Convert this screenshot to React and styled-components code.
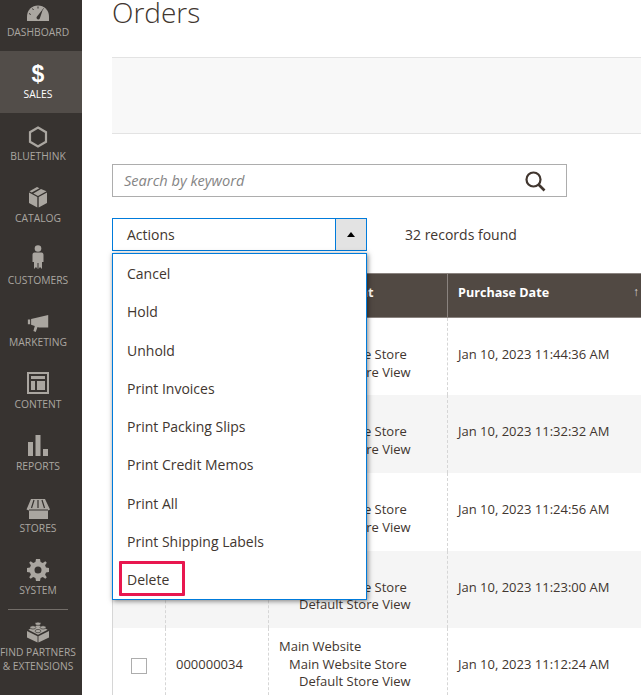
import React from "react";
import styled, { createGlobalStyle } from "styled-components";

const Global = createGlobalStyle`
  html, body { margin: 0; padding: 0; background: #fff; }
  body { font-family: "Open Sans", "Liberation Sans", sans-serif; color: #41362f; }
  * { box-sizing: border-box; }
`;

const Viewport = styled.div`
  width: 641px;
  height: 695px;
  overflow: hidden;
`;
const Page = styled.div`
  display: flex;
  margin-top: -11px;
  height: 706px;
`;
const Sidebar = styled.nav`
  width: 82px;
  flex: none;
  background: #373330;
  display: flex;
  flex-direction: column;
`;
const NavItem = styled.a`
  height: 62px;
  flex: none;
  display: flex;
  flex-direction: column;
  align-items: center;
  justify-content: flex-end;
  padding: 0 6px 12px 0;
  background: ${p => (p.$active ? "#524d49" : "transparent")};
  color: ${p => (p.$active ? "#fff" : "#aaa6a0")};
  font-size: 10.3px;
  line-height: 14px;
  text-transform: uppercase;
  white-space: nowrap;
  svg { display: block; margin-bottom: ${p => p.$gap}px; }
`;
const Dollar = styled.span`
  font-family: "Liberation Sans", sans-serif;
  font-weight: 700;
  font-size: 23px;
  line-height: 24px;
  margin-bottom: 1px;
  color: #fff;
`;
const Divider = styled.div`
  width: 60px;
  height: 1px;
  background: #736e69;
  margin-left: 8px;
`;
const PartnerItem = styled.a`
  display: flex;
  flex-direction: column;
  align-items: center;
  padding: 10px 6px 0 0;
  color: #aaa6a0;
  font-size: 10.25px;
  line-height: 14px;
  text-transform: uppercase;
  text-align: center;
  white-space: nowrap;
  svg { display: block; margin-bottom: 1px; }
`;
const Main = styled.main`
  flex: 1;
  min-width: 0;
  padding-left: 30px;
  overflow: hidden;
`;
const TitleRow = styled.div`
  height: 68px;
  padding-top: 6px;
`;
const Title = styled.h1`
  margin: 0;
  font-size: 28px;
  line-height: 34px;
  font-weight: 300;
  color: #41362f;
`;
const FilterBar = styled.div`
  height: 77px;
  background: #f8f8f8;
  border-top: 1px solid #e3e3e3;
  border-bottom: 1px solid #e3e3e3;
`;
const Search = styled.div`
  margin-top: 30px;
  width: 455px;
  height: 33px;
  border: 1px solid #adadad;
  display: flex;
  align-items: center;
  justify-content: space-between;
  padding: 0 20px 0 11px;
`;
const Placeholder = styled.span`
  font-size: 14.6px;
  line-height: 20px;
  padding-bottom: 2px;
  font-style: italic;
  color: #858585;
`;
const ActionsRow = styled.div`
  margin-top: 21px;
  height: 33px;
  display: flex;
  align-items: center;
  gap: 38px;
  position: relative;
`;
const Select = styled.div`
  width: 255px;
  height: 33px;
  border: 1px solid #007bdb;
  display: flex;
  font-size: 14px;
`;
const SelectLabel = styled.span`
  flex: 1;
  padding-left: 14px;
  line-height: 31px;
`;
const Toggle = styled.span`
  width: 31px;
  background: #e3e3e3;
  border-left: 1px solid #007bdb;
  display: flex;
  align-items: center;
  justify-content: center;
  &::after {
    content: "";
    border-left: 4px solid transparent;
    border-right: 4px solid transparent;
    border-bottom: 5px solid #000;
  }
`;
const Records = styled.span`
  font-size: 14px;
`;
const Menu = styled.ul`
  position: absolute;
  top: 35px;
  left: 0;
  width: 255px;
  height: 347px;
  margin: 0;
  padding: 1px 0 0;
  list-style: none;
  background: #fff;
  border: 1px solid #007bdb;
  box-shadow: 1px 1px 5px rgba(0, 0, 0, 0.5);
  z-index: 10;
`;
const MenuItem = styled.li`
  position: relative;
  height: 38.25px;
  padding-left: 14px;
  font-size: 14px;
  line-height: 38px;
`;
const Highlight = styled.span`
  position: absolute;
  left: 6px;
  top: 0;
  width: 66px;
  height: 35px;
  border: 3px solid #e8174f;
  border-radius: 1px;
`;
const Table = styled.table`
  margin-top: 22px;
  width: 560px;
  table-layout: fixed;
  border-collapse: collapse;
  font-size: 13px;
`;
const Th = styled.th`
  height: 44px;
  padding: 0 10px 7px;
  background: #514943;
  color: #fff;
  font-size: 12.6px;
  font-weight: 700;
  text-align: left;
  border: 1px solid #8a837f;
  position: relative;
`;
const SortArrow = styled.span`
  position: absolute;
  left: 185px;
  top: 9px;
  font-weight: 400;
  font-size: 12px;
  color: #d6d6d6;
`;
const Row = styled.tr`
  height: ${p => p.$h}px;
  background: ${p => (p.$alt ? "#f5f5f5" : "#fff")};
`;
const Td = styled.td`
  padding: 0 10px 3px;
  line-height: 17.7px;
  border-left: 1px dashed #d6d6d6;
  border-right: 1px dashed #d6d6d6;
  color: #41362f;
  white-space: nowrap;
  &:first-child { border-left: 1px solid #d6d6d6; }
`;
const CheckCell = styled(Td)`
  padding: 0 0 0 18px;
`;
const Checkbox = styled.span`
  display: block;
  width: 16px;
  height: 16px;
  background: #fff;
  border: 1px solid #adadad;
`;
const StoreLine = styled.div`
  padding-left: ${p => p.$indent}px;
`;

const c = "#aaa6a0";
const dark = "#373330";
const icons = {
  dashboard: (
    <svg width="24" height="24" viewBox="0 0 24 24">
      <path fill={c} d="M1 24V19.500C1 13 6 8.500 12 8.500S23 13 23 19.500V24Z" />
      <path fill={dark} d="M12 22.500A1.800 1.800 0 0 1 11 19.500L17 12 13.800 21.500A1.800 1.800 0 0 1 12 22.500Z" />
      <path stroke={dark} strokeWidth="1" fill="none" d="M12 9.500V11.500M6.500 11.500 7.500 13M17.500 11.500 16.800 12.500M3 16.500 4.800 17.500" />
    </svg>
  ),
  hex: (
    <svg width="20" height="22" viewBox="0 0 20 22">
      <path fill="none" stroke={c} strokeWidth="2.200" d="M10 1.500 18 6.200V15.800L10 20.500 2 15.800V6.200Z" />
    </svg>
  ),
  catalog: (
    <svg width="20" height="22" viewBox="0 0 20 22">
      <path fill={c} d="M1 6.500 9.300 11V21.500L1 17ZM19 6.500 10.700 11V21.500L19 17ZM9 1 11.500 2.300 3.700 6.500 1.500 5.300ZM13 3 18.500 5.300 10 9.900 5.300 7.400Z" />
    </svg>
  ),
  customers: (
    <svg width="12" height="24" viewBox="0 0 12 24">
      <circle cx="6" cy="3.500" r="3.300" fill={c} />
      <path fill={c} d="M2.500 7.500H9.500C10.800 7.500 11.500 8.500 11.500 10V17H10V24L8 22 6.500 24V18H5.500V24L4 22 2 24V17H.5V10C.5 8.500 1.200 7.500 2.500 7.500Z" />
    </svg>
  ),
  marketing: (
    <svg width="23" height="18.500" viewBox="0 0 23 20">
      <path fill={c} d="M0 6H2.500V11H0ZM3.500 5.500 22 1V14.500H12L10.500 14 8.500 19.500 6 18.500 7.500 13 3.500 11.500Z" />
    </svg>
  ),
  content: (
    <svg width="22" height="22" viewBox="0 0 22 22">
      <path fill={c} fillRule="evenodd" d="M0 0H22V22H0ZM2 2V20H20V2ZM4 4H18V7H4ZM4 9H8V18H4ZM10 9H18V18H10Z" />
    </svg>
  ),
  reports: (
    <svg width="20" height="21" viewBox="0 0 20 21">
      <path fill={c} d="M0 7H5V21H0ZM7.500 0H12.500V21H7.500ZM15 14H20V21H15Z" />
    </svg>
  ),
  stores: (
    <svg width="24" height="20" viewBox="0 0 24 20">
      <path fill={c} d="M5 0H19L24 10.500 22 11.500V20H3V11.500L.5 10.500Z" />
      <path stroke={dark} strokeWidth="1.200" fill="none" d="M8 1 5.500 9M12 1V9M16 1 18.500 9M3 11H22" />
    </svg>
  ),
  system: (
    <svg width="22" height="22" viewBox="0 0 22 22">
      <path fill={c} fillRule="evenodd" d="M9 0H13L13.600 3 15.800 3.900 18.300 2.200 19.800 3.700 18.100 6.200 19 8.400 22 9V13L19 13.600 18.100 15.800 19.800 18.300 18.300 19.800 15.800 18.100 13.600 19 13 22H9L8.400 19 6.200 18.100 3.700 19.800 2.200 18.300 3.900 15.800 3 13.600 0 13V9L3 8.400 3.900 6.200 2.200 3.700 3.700 2.200 6.200 3.900 8.400 3ZM11 7.500A3.500 3.500 0 1 0 11 14.500 3.500 3.500 0 0 0 11 7.500Z" />
    </svg>
  ),
  partners: (
    <svg width="22" height="24" viewBox="0 0 24 24">
      <path fill={c} d="M0 11 11.500 16.500V23.500L0 18ZM24 11 12.500 16.500V23.500L24 18Z" />
      <path fill={c} d="M12 4 22.500 9.500 12 15 1.500 9.500Z" />
      <ellipse cx="12" cy="3" rx="3.200" ry="1.800" fill={c} stroke={dark} strokeWidth=".7" />
      <ellipse cx="6.500" cy="7" rx="3.200" ry="1.800" fill={c} stroke={dark} strokeWidth=".7" />
      <ellipse cx="17.500" cy="7" rx="3.200" ry="1.800" fill={c} stroke={dark} strokeWidth=".7" />
      <ellipse cx="12" cy="11" rx="3.200" ry="1.800" fill={c} stroke={dark} strokeWidth=".7" />
    </svg>
  ),
};

const SearchIcon = () => (
  <svg width="22" height="22" viewBox="0 0 22 22">
    <circle cx="9.500" cy="9.500" r="7" fill="none" stroke="#41362f" strokeWidth="2.200" />
    <path d="M14.500 14.500 20.500 20.500" stroke="#41362f" strokeWidth="2.600" />
  </svg>
);

const navItems = [
  { label: "Dashboard", icon: icons.dashboard, gap: 4 },
  { label: "Sales", icon: <Dollar>$</Dollar>, gap: 4, active: true },
  { label: "Bluethink", icon: icons.hex, gap: 1.5 },
  { label: "Catalog", icon: icons.catalog, gap: 3.5 },
  { label: "Customers", icon: icons.customers, gap: 4 },
  { label: "Marketing", icon: icons.marketing, gap: 2.5 },
  { label: "Content", icon: icons.content, gap: 3 },
  { label: "Reports", icon: icons.reports, gap: 3 },
  { label: "Stores", icon: icons.stores, gap: 2 },
  { label: "System", icon: icons.system, gap: 2 },
];

const actions = ["Cancel", "Hold", "Unhold", "Print Invoices", "Print Packing Slips", "Print Credit Memos", "Print All", "Print Shipping Labels", "Delete"];

const rows = [
  ["000000038", "Jan 10, 2023 11:44:36 AM", 77],
  ["000000037", "Jan 10, 2023 11:32:32 AM", 78],
  ["000000036", "Jan 10, 2023 11:24:56 AM", 78],
  ["000000035", "Jan 10, 2023 11:23:00 AM", 77],
  ["000000034", "Jan 10, 2023 11:12:24 AM", 77],
];

export default function App() {
  return (
    <Viewport>
      <Global />
      <Page>
        <Sidebar>
          {navItems.map(({ label, icon, gap, active }) => (
            <NavItem key={label} $active={active} $gap={gap}>
              {icon}
              {label}
            </NavItem>
          ))}
          <Divider />
          <PartnerItem>
            {icons.partners}
            Find Partners
            <br />& Extensions
          </PartnerItem>
        </Sidebar>
        <Main>
          <TitleRow>
            <Title>Orders</Title>
          </TitleRow>
          <FilterBar />
          <Search>
            <Placeholder>Search by keyword</Placeholder>
            <SearchIcon />
          </Search>
          <ActionsRow>
            <Select>
              <SelectLabel>Actions</SelectLabel>
              <Toggle />
            </Select>
            <Records>32 records found</Records>
            <Menu>
              {actions.map(a => (
                <MenuItem key={a}>
                  {a}
                  {a === "Delete" && <Highlight />}
                </MenuItem>
              ))}
            </Menu>
          </ActionsRow>
          <Table>
            <colgroup>
              <col width="53" />
              <col width="103" />
              <col width="179" />
              <col width="225" />
            </colgroup>
            <thead>
              <tr>
                <Th />
                <Th>ID</Th>
                <Th>Purchase Point</Th>
                <Th>
                  Purchase Date
                  <SortArrow>↑</SortArrow>
                </Th>
              </tr>
            </thead>
            <tbody>
              {rows.map(([id, date, h], i) => (
                <Row key={id} $alt={i % 2 === 1} $h={h}>
                  <CheckCell><Checkbox /></CheckCell>
                  <Td>{id}</Td>
                  <Td>
                    <StoreLine $indent={0}>Main Website</StoreLine>
                    <StoreLine $indent={10}>Main Website Store</StoreLine>
                    <StoreLine $indent={20}>Default Store View</StoreLine>
                  </Td>
                  <Td>{date}</Td>
                </Row>
              ))}
            </tbody>
          </Table>
        </Main>
      </Page>
    </Viewport>
  );
}
